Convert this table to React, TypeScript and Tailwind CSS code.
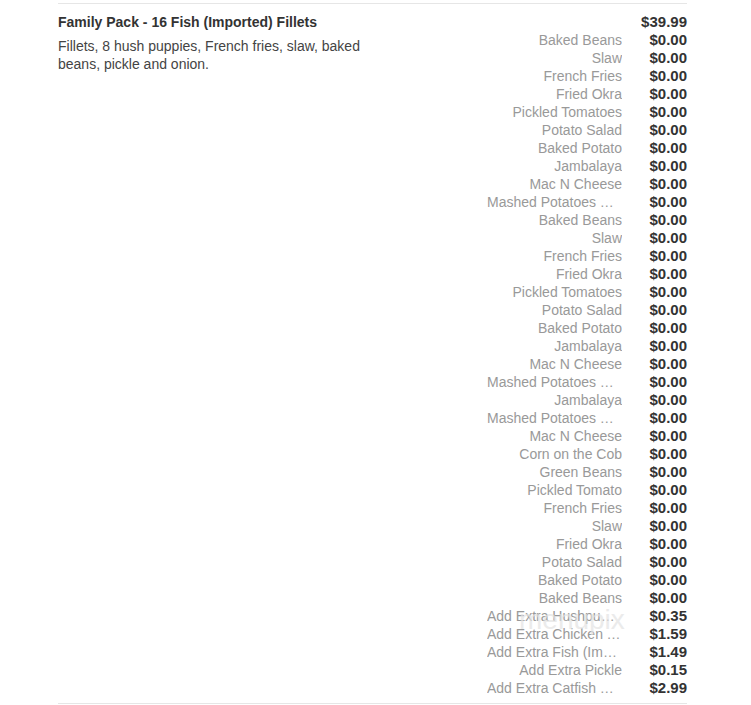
import React from "react";

const items: [string, string][] = [
  ["Baked Beans", "$0.00"],
  ["Slaw", "$0.00"],
  ["French Fries", "$0.00"],
  ["Fried Okra", "$0.00"],
  ["Pickled Tomatoes", "$0.00"],
  ["Potato Salad", "$0.00"],
  ["Baked Potato", "$0.00"],
  ["Jambalaya", "$0.00"],
  ["Mac N Cheese", "$0.00"],
  ["Mashed Potatoes & Gravy", "$0.00"],
  ["Baked Beans", "$0.00"],
  ["Slaw", "$0.00"],
  ["French Fries", "$0.00"],
  ["Fried Okra", "$0.00"],
  ["Pickled Tomatoes", "$0.00"],
  ["Potato Salad", "$0.00"],
  ["Baked Potato", "$0.00"],
  ["Jambalaya", "$0.00"],
  ["Mac N Cheese", "$0.00"],
  ["Mashed Potatoes & Gravy", "$0.00"],
  ["Jambalaya", "$0.00"],
  ["Mashed Potatoes & Gravy", "$0.00"],
  ["Mac N Cheese", "$0.00"],
  ["Corn on the Cob", "$0.00"],
  ["Green Beans", "$0.00"],
  ["Pickled Tomato", "$0.00"],
  ["French Fries", "$0.00"],
  ["Slaw", "$0.00"],
  ["Fried Okra", "$0.00"],
  ["Potato Salad", "$0.00"],
  ["Baked Potato", "$0.00"],
  ["Baked Beans", "$0.00"],
  ["Add Extra Hushpuppies", "$0.35"],
  ["Add Extra Chicken Tender", "$1.59"],
  ["Add Extra Fish (Imported)", "$1.49"],
  ["Add Extra Pickle", "$0.15"],
  ["Add Extra Catfish Fillet", "$2.99"],
];

export default function App() {
  return (
    <div
      className="w-[751px] h-[705px] bg-white relative"
      style={{ fontFamily: '"Liberation Sans", Arial, sans-serif' }}
    >
      <div className="ml-[58px] w-[629px] pt-[3px]">
        <div className="border-t border-b border-[#e6e6e6] pt-[8px] pb-[6px] flex">
          <div className="flex-1">
            <div className="text-[14px] leading-[20px] font-bold text-[#333]">
              Family Pack - 16 Fish (Imported) Fillets
            </div>
            <div className="mt-[5px] text-[14px] leading-[18px] text-[#444] w-[320px]">
              Fillets, 8 hush puppies, French fries, slaw, baked beans, pickle and onion.
            </div>
          </div>
          <div className="flex flex-col">
            <div className="flex h-[19px] items-start">
              <div className="w-[135px]" />
              <div className="w-[65px] text-right text-[15px] leading-[20px] font-bold text-[#333]">
                $39.99
              </div>
            </div>
            {items.map(([name, price], i) => (
              <div key={i} className="flex h-[18px]">
                <div className="w-[135px] truncate text-right text-[14px] leading-[18px] text-[#999]">
                  {name}
                </div>
                <div className="w-[65px] text-right text-[15px] leading-[18px] font-bold text-[#333]">
                  {price}
                </div>
              </div>
            ))}
          </div>
        </div>
      </div>
      <div className="absolute left-[519px] top-[604px] text-[28px] leading-[32px] text-[#e3e3e3] opacity-70 pointer-events-none">
        menupix
      </div>
    </div>
  );
}
